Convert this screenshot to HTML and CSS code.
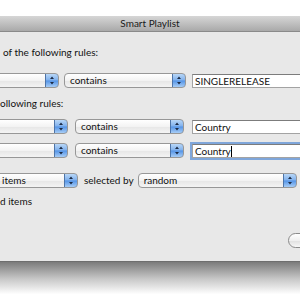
FILE: index.html
```html
<!DOCTYPE html>
<html lang="en">
<head>
<meta charset="UTF-8">
<title>Smart Playlist</title>
<link rel="stylesheet" href="styles.css">
</head>
<body>

<div class="window">
    <div class="titlebar">Smart Playlist</div>
    <div class="content">
        <div class="label first">of the following rules:</div>

        <div class="row row-top">
            <div class="popup w-field1"><span class="stepper"><svg viewBox="0 0 14 15" width="14" height="15"><path d="M5 6 L7 3.5 L9 6 Z M5 9 L7 11.5 L9 9 Z" fill="#1c2b45"/></svg></span></div>
            <div class="popup w-op1">contains<span class="stepper"><svg viewBox="0 0 14 15" width="14" height="15"><path d="M5 6 L7 3.5 L9 6 Z M5 9 L7 11.5 L9 9 Z" fill="#1c2b45"/></svg></span></div>
            <div class="field">SINGLERELEASE</div>
        </div>

        <div class="label second">ollowing rules:</div>

        <div class="row row-nested">
            <div class="popup w-field2"><span class="stepper"><svg viewBox="0 0 14 15" width="14" height="15"><path d="M5 6 L7 3.5 L9 6 Z M5 9 L7 11.5 L9 9 Z" fill="#1c2b45"/></svg></span></div>
            <div class="popup w-op2">contains<span class="stepper"><svg viewBox="0 0 14 15" width="14" height="15"><path d="M5 6 L7 3.5 L9 6 Z M5 9 L7 11.5 L9 9 Z" fill="#1c2b45"/></svg></span></div>
            <div class="field">Country</div>
        </div>

        <div class="row row-nested2">
            <div class="popup w-field2"><span class="stepper"><svg viewBox="0 0 14 15" width="14" height="15"><path d="M5 6 L7 3.5 L9 6 Z M5 9 L7 11.5 L9 9 Z" fill="#1c2b45"/></svg></span></div>
            <div class="popup w-op2">contains<span class="stepper"><svg viewBox="0 0 14 15" width="14" height="15"><path d="M5 6 L7 3.5 L9 6 Z M5 9 L7 11.5 L9 9 Z" fill="#1c2b45"/></svg></span></div>
            <div class="field focused">Country<span class="caret"></span></div>
        </div>

        <div class="row row-limit">
            <div class="popup w-items">items<span class="stepper"><svg viewBox="0 0 14 15" width="14" height="15"><path d="M5 6 L7 3.5 L9 6 Z M5 9 L7 11.5 L9 9 Z" fill="#1c2b45"/></svg></span></div>
            <span class="inline-label">selected by</span>
            <div class="popup w-random">random<span class="stepper"><svg viewBox="0 0 14 15" width="14" height="15"><path d="M5 6 L7 3.5 L9 6 Z M5 9 L7 11.5 L9 9 Z" fill="#1c2b45"/></svg></span></div>
        </div>

        <div class="label third">d items</div>

        <div class="buttons">
            <div class="button">Cancel</div>
        </div>
    </div>
</div>
<div class="shadow"></div>

</body>
</html>
```

FILE: styles.css
```css
html, body {
    margin: 0;
    padding: 0;
    width: 300px;
    height: 300px;
    overflow: hidden;
    background: #fff;
    font-family: 'Lato', 'Liberation Sans', sans-serif;
    font-size: 10px;
    color: #111;
}

.window {
    margin-top: 16px;
    margin-left: -40px;
    width: 420px;
    height: 246px;
    display: flex;
    flex-direction: column;
}

.titlebar {
    height: 15px;
    line-height: 15px;
    text-align: center;
    padding-left: 40px;
    width: 300px;
    background: linear-gradient(#d6d6d6, #a9a9a9);
    border-bottom: 1px solid #8a8a8a;
    color: #1a1a1a;
    box-sizing: content-box;
}

.content {
    flex: 1;
    background: #e8e8e8;
    padding-top: 13px;
    border-bottom: 1px solid #6e6e6e;
}

.label {
    height: 14px;
    line-height: 14px;
    padding-left: 40px;
}

.first { padding-left: 43px; }
.second { margin-top: 8px; }
.third { margin-top: 6px; }

.row {
    display: flex;
    align-items: center;
    height: 15px;
}

.row-top { margin-top: 14px; gap: 5px; }
.row-top .field { margin-left: 1px; }
.row-nested { margin-top: 9px; gap: 7px; }
.row-nested .field { margin-left: 1px; }
.row-nested2 { margin-top: 9px; gap: 7px; }
.row-nested2 .field { margin-left: 1px; }
.row-limit { margin-top: 15px; gap: 6px; }

.popup {
    position: relative;
    box-sizing: border-box;
    height: 15px;
    line-height: 13px;
    padding-left: 5px;
    border: 1px solid #979797;
    border-radius: 4px;
    background: linear-gradient(#ffffff, #f3f3f3 50%, #e6e6e6 51%, #f4f4f4);
    overflow: hidden;
}

.stepper {
    position: absolute;
    top: -1px;
    right: -1px;
    width: 14px;
    height: 15px;
    border-radius: 0 4px 4px 0;
    border: 1px solid #4d74a8;
    box-sizing: border-box;
    background: linear-gradient(#b9d7f7, #7fb0ec 48%, #5393e6 52%, #a7cdf6);
}

.stepper svg {
    position: absolute;
    top: -1px;
    left: -1px;
}

.w-field1 { width: 99px; }
.w-op1 { width: 122px; }
.w-field2 { width: 108px; }
.w-op2 { width: 109px; }
.w-items { width: 118px; padding-left: 41px; }
.w-random { width: 159px; margin-left: -2px; }

.field {
    box-sizing: border-box;
    width: 150px;
    height: 14px;
    line-height: 13px;
    padding-left: 2px;
    background: #fff;
    border: 1px solid #a3a3a3;
    border-top-color: #7c7c7c;
}

.focused {
    box-shadow: 0 0 0 2px #7fa6da;
}

.caret {
    display: inline-block;
    width: 1px;
    height: 11px;
    background: #000;
    vertical-align: -2px;
}

.inline-label {
    line-height: 15px;
}

.buttons {
    display: flex;
    justify-content: flex-end;
    padding-right: 12px;
    margin-top: 25px;
}

.button {
    box-sizing: border-box;
    width: 80px;
    height: 15px;
    line-height: 13px;
    text-align: center;
    border: 1px solid #8b8b8b;
    border-radius: 8px;
    background: linear-gradient(#ffffff, #f0f0f0 50%, #e0e0e0 51%, #f7f7f7);
}

.shadow {
    height: 38px;
    background: linear-gradient(#7b7b7b, #c8c8c8 45%, #fff 85%);
}
```
